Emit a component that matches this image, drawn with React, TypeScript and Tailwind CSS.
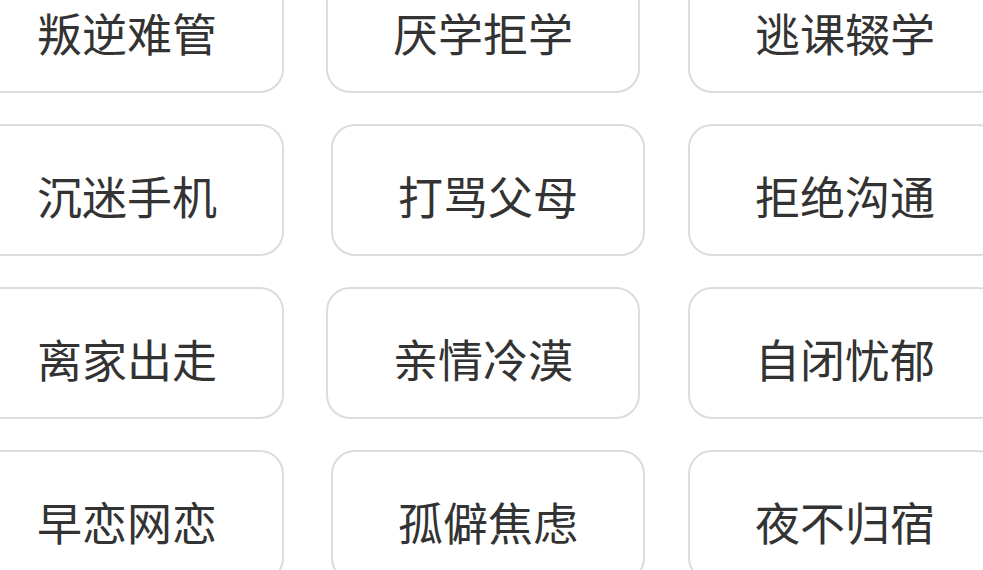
// Problem-tag grid: four rows of rounded bordered chips, clipped by the viewport

const ROWS: { items: string[]; midOffset: string; rightOffset: string }[] = [
  { items: ["叛逆难管", "厌学拒学", "逃课辍学"], midOffset: "ml-[42px]", rightOffset: "ml-[48px]" },
  { items: ["沉迷手机", "打骂父母", "拒绝沟通"], midOffset: "ml-[47px]", rightOffset: "ml-[43px]" },
  { items: ["离家出走", "亲情冷漠", "自闭忧郁"], midOffset: "ml-[42px]", rightOffset: "ml-[48px]" },
  { items: ["早恋网恋", "孤僻焦虑", "夜不归宿"], midOffset: "ml-[47px]", rightOffset: "ml-[43px]" },
];

function Tag({ label, className = "" }: { label: string; className?: string }) {
  return (
    <div
      className={`flex h-[132px] w-[314px] shrink-0 items-center justify-center rounded-[24px] border-2 border-[#dcdcdc] bg-white ${className}`}
    >
      <span className="pt-[10px] text-[45px] leading-none text-[#333]">{label}</span>
    </div>
  );
}

export default function App() {
  return (
    <div
      className="h-[570px] w-[983px] overflow-hidden bg-white"
      style={{ fontFamily: '"Microsoft YaHei", "Noto Sans CJK SC", "Noto Sans", sans-serif' }}
    >
      <div className="-ml-[30px] -mt-[39px] flex flex-col gap-[31px]">
        {ROWS.map((row) => (
          <div key={row.items[0]} className="flex">
            <Tag label={row.items[0]} />
            <Tag label={row.items[1]} className={row.midOffset} />
            <Tag label={row.items[2]} className={row.rightOffset} />
          </div>
        ))}
      </div>
    </div>
  );
}
